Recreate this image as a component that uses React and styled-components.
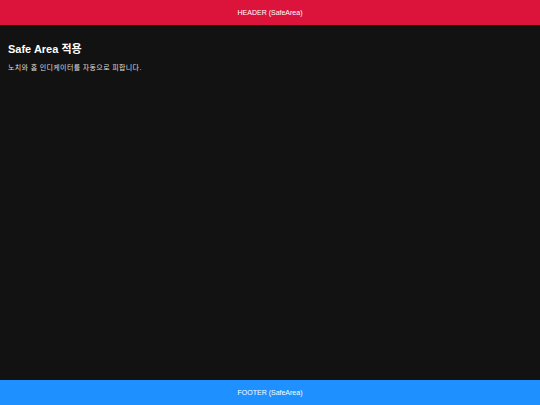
import React from 'react'
import styled, { createGlobalStyle } from 'styled-components'

const Global = createGlobalStyle`
  html, body, #root { margin: 0; padding: 0; height: 100%; }
  body {
    background: #121212;
    font-family: "Liberation Sans", Arial, "Noto Sans CJK KR", sans-serif;
  }
`

const Screen = styled.div`
  display: flex;
  flex-direction: column;
  height: 405px;
  background: #121212;
`

const Bar = styled.div`
  height: 25px;
  display: flex;
  align-items: center;
  justify-content: center;
  background: ${({ color }) => color};
  color: #fff;
  font-size: 7px;
  flex-shrink: 0;
`

const Content = styled.main`
  flex: 1;
  padding: 15px 8px;
  color: #fff;
`

const Title = styled.h1`
  margin: 0 0 6px;
  font-size: 11px;
  font-weight: 700;
`

const Desc = styled.p`
  margin: 0;
  font-size: 7px;
  letter-spacing: 0.35px;
  color: #ddd;
`

const App = () => (
  <Screen>
    <Global />
    <Bar color="#DC143C">HEADER (SafeArea)</Bar>
    <Content>
      <Title>Safe Area 적용</Title>
      <Desc>노치와 홈 인디케이터를 자동으로 피합니다.</Desc>
    </Content>
    <Bar color="#1E90FF">FOOTER (SafeArea)</Bar>
  </Screen>
)

export default App
